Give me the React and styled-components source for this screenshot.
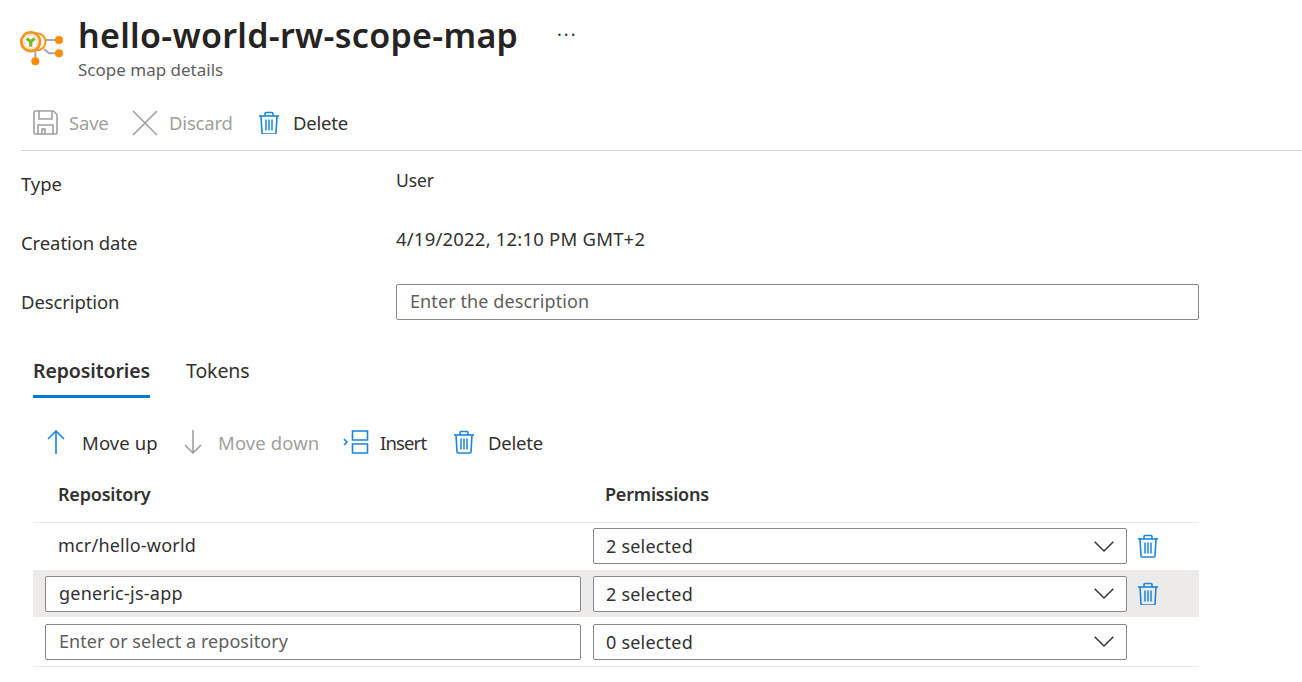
import React from "react";
import styled, { createGlobalStyle } from "styled-components";

const Global = createGlobalStyle`
  html, body { margin: 0; padding: 0; background: #fff; }
  body { font-family: "Noto Sans", "Open Sans", sans-serif; color: #323130; overflow: hidden; }
`;
const Page = styled.div`width: 1302px; height: 682px; padding-left: 21px; box-sizing: border-box; overflow: hidden;`;
const Header = styled.header`display: flex; align-items: flex-start; height: 95px; padding-top: 12px; box-sizing: border-box;`;
const Logo = styled.svg`width: 44px; height: 44px; margin-top: 16px; margin-left: -1px; flex: none;`;
const TitleBlock = styled.div`margin-left: 14px; width: 479px;`;
const Title = styled.h1`margin: 0; font-size: 34px; line-height: 46px; font-weight: 600; color: #252423; letter-spacing: 0.3px; white-space: nowrap;`;
const Subtitle = styled.div`font-size: 17px; line-height: 22px; color: #605e5c; margin-top: 1px;`;
const More = styled.div`font-size: 18px; line-height: 18px; margin-top: 13px; letter-spacing: 2px; color: #323130;`;
const CommandBar = styled.div`display: flex; align-items: center; height: 55px; border-bottom: 1px solid #d6d6d6; padding-left: 12px;`;
const Cmd = styled.div`display: flex; align-items: center; width: ${p => p.$w}px; flex: none; color: ${p => (p.$off ? "#a19f9d" : "#323130")}; font-size: 18.5px; letter-spacing: ${p => p.$sp ?? -0.2}px; white-space: nowrap;`;
const IconSlot = styled.span`display: inline-flex; width: ${p => p.$w}px; flex: none;`;
const Fields = styled.div`display: grid; grid-template-columns: 375px 803px; grid-auto-rows: 59px; padding-top: 4px;`;
const Label = styled.div`font-size: 18.5px; letter-spacing: -0.1px; line-height: 26px; padding-top: 16px;`;
const Value = styled.div`font-size: ${p => p.$size || 17.5}px; letter-spacing: ${p => p.$sp ?? -0.1}px; line-height: 26px; padding-top: 12px;`;
const DescInput = styled.div`margin-top: 11px; height: 36px; box-sizing: border-box; border: 1px solid #8a8886; border-radius: 2px; padding-left: 13px; font-size: 18px; letter-spacing: 0.1px; line-height: 32px; color: #605e5c;`;
const Content = styled.div`margin-left: 12px; width: 1166px;`;
const Tabs = styled.div`display: flex; gap: 36px; margin-top: 20px; height: 58px;`;
const Tab = styled.div`font-size: 19.5px; letter-spacing: -0.1px; font-weight: ${p => (p.$on ? 600 : 400)}; line-height: 28px; padding-top: 5px; height: 46px; box-sizing: border-box; border-bottom: ${p => (p.$on ? "3px solid #0078d4" : "none")}; width: ${p => p.$w}px; white-space: nowrap;`;
const SubBar = styled.div`display: flex; align-items: center; height: 48px; margin-top: 8px; padding-left: 14px;`;
const Head = styled.div`display: grid; grid-template-columns: 547px 1fr; height: 56px; padding: 14px 0 0 25px; box-sizing: border-box; border-bottom: 1px solid #edebe9; align-items: start; margin-top: 1px;`;
const HeadCell = styled.div`font-size: 18px; font-weight: 600; letter-spacing: -0.2px; line-height: 26px;`;
const Row = styled.div`display: grid; grid-template-columns: 548px 534px 1fr; align-items: center; height: ${p => p.$h}px; padding-left: 12px; padding-bottom: ${p => p.$pb || 0}px; box-sizing: border-box; background: ${p => (p.$hl ? "#edebe9" : "transparent")}; border-bottom: ${p => (p.$line ? "1px solid #edebe9" : "none")};`;
const RepoText = styled.div`padding-left: 13px; font-size: 18px; letter-spacing: 0.2px; margin-top: -2px;`;
const Field = styled.div`width: ${p => p.$w}px; height: 36px; box-sizing: border-box; border: 1px solid #8a8886; border-radius: 2px; background: #fff; padding-left: 13px; font-size: 18px; letter-spacing: ${p => (p.$ph ? 0.05 : 0.25)}px; line-height: 32px; color: ${p => (p.$ph ? "#605e5c" : "#323130")};`;
const Select = styled(Field)`display: flex; justify-content: space-between; align-items: center; padding-right: 12px; padding-left: 12px; letter-spacing: 0.2px;`;
const TrashBtn = styled.div`display: flex; padding-left: 10px;`;

const Trash = ({ size = 22 }) => (
  <svg width={size} height={size * 1.09} viewBox="0 0 22 24" fill="none" stroke="#1b86d8" strokeWidth="1.6">
    <path d="M1 5h20" />
    <path d="M3 5l1 17a1 1 0 0 0 1 1h12a1 1 0 0 0 1-1l1-17" />
    <path d="M7 5V2.500a1 1 0 0 1 1-1h6a1 1 0 0 1 1 1V5" />
    <path d="M8 8.500v11M11 8.500v11M14 8.500v11" strokeWidth="1.5" />
  </svg>
);
const Save = () => (
  <svg width="25" height="25" viewBox="0 0 25 25" fill="none" stroke="#a19f9d" strokeWidth="1.6">
    <path d="M1 2a1 1 0 0 1 1-1h18.500L24 4.500V23a1 1 0 0 1-1 1H2a1 1 0 0 1-1-1z" />
    <path d="M6 1v8h13V1" />
    <path d="M5 24v-9h15v9" />
    <path d="M9 24v-5h3v5" />
  </svg>
);
const Cross = () => (
  <svg width="26" height="26" viewBox="0 0 26 26" fill="none" stroke="#a19f9d" strokeWidth="1.6">
    <path d="M1 1l24 24M25 1L1 25" />
  </svg>
);
const Arrow = ({ up, color }) => (
  <svg width="18" height="24" viewBox="0 0 18 24" fill="none" stroke={color} strokeWidth="1.6">
    {up ? <path d="M9 24V1M1 9l8-8 8 8" /> : <path d="M9 0v23M1 15l8 8 8-8" />}
  </svg>
);
const Insert = () => (
  <svg width="26" height="24" viewBox="0 0 26 24" fill="none" stroke="#1b86d8" strokeWidth="1.6">
    <path d="M9.500 1h15v9h-15zM9.500 14h15v9h-15z" />
    <path d="M1 9l3 3-3 3" />
  </svg>
);
const Chevron = () => (
  <svg width="20" height="11" viewBox="0 0 20 11" fill="none" stroke="#323130" strokeWidth="1.4">
    <path d="M.7.7L10 10 19.300.7" />
  </svg>
);
const AppLogo = () => (
  <Logo viewBox="0 0 44 44">
    <path d="M26 12h13M24 21l5 4.300h10M15.300 22v11" stroke="#a6a6a6" strokeWidth="2" fill="none" />
    <circle cx="17" cy="13.700" r="8.500" fill="#fff" stroke="#f7941d" strokeWidth="2" />
    <circle cx="10.700" cy="13.700" r="9.300" fill="#fff" stroke="#f7941d" strokeWidth="2.800" />
    <circle cx="10.700" cy="13.700" r="6.600" fill="#fff" stroke="#fbd6a4" strokeWidth="1" />
    <path d="M6.700 10.500l4 3.200 4-3.200M10.700 13.700v5" stroke="#7db928" strokeWidth="3.200" fill="none" />
    <circle cx="39" cy="12" r="4" fill="#ff8c00" />
    <circle cx="39" cy="25.300" r="4" fill="#ff8c00" />
    <circle cx="15.300" cy="33.300" r="4" fill="#ff8c00" />
  </Logo>
);

export default function App() {
  return (
    <Page>
      <Global />
      <Header>
        <AppLogo />
        <TitleBlock>
          <Title>hello-world-rw-scope-map</Title>
          <Subtitle>Scope map details</Subtitle>
        </TitleBlock>
        <More>···</More>
      </Header>
      <CommandBar>
        <Cmd $off $w={99}><IconSlot $w={36}><Save /></IconSlot>Save</Cmd>
        <Cmd $off $w={126}><IconSlot $w={37}><Cross /></IconSlot>Discard</Cmd>
        <Cmd $w={100}><IconSlot $w={35}><Trash /></IconSlot>Delete</Cmd>
      </CommandBar>
      <Fields>
        <Label>Type</Label><Value>User</Value>
        <Label>Creation date</Label><Value $size={18.5} $sp={0.2}>4/19/2022, 12:10 PM GMT+2</Value>
        <Label>Description</Label><DescInput>Enter the description</DescInput>
      </Fields>
      <Content>
        <Tabs>
          <Tab $on $w={117}>Repositories</Tab>
          <Tab $w={70}>Tokens</Tab>
        </Tabs>
        <SubBar>
          <Cmd $w={137} $sp={0.1}><IconSlot $w={35}><Arrow up color="#1b86d8" /></IconSlot>Move up</Cmd>
          <Cmd $off $w={159} $sp={0.1}><IconSlot $w={34}><Arrow color="#a19f9d" /></IconSlot>Move down</Cmd>
          <Cmd $w={110} $sp={-0.85}><IconSlot $w={37}><Insert /></IconSlot>Insert</Cmd>
          <Cmd $w={100}><IconSlot $w={35}><Trash /></IconSlot>Delete</Cmd>
        </SubBar>
        <Head>
          <HeadCell>Repository</HeadCell>
          <HeadCell>Permissions</HeadCell>
        </Head>
        <Row $h={47} $pb={1}>
          <RepoText>mcr/hello-world</RepoText>
          <Select $w={534}>2 selected<Chevron /></Select>
          <TrashBtn><Trash /></TrashBtn>
        </Row>
        <Row $h={47} $hl>
          <Field $w={536}>generic-js-app</Field>
          <Select $w={534}>2 selected<Chevron /></Select>
          <TrashBtn><Trash /></TrashBtn>
        </Row>
        <Row $h={50} $line>
          <Field $w={536} $ph>Enter or select a repository</Field>
          <Select $w={534}>0 selected<Chevron /></Select>
        </Row>
      </Content>
    </Page>
  );
}
